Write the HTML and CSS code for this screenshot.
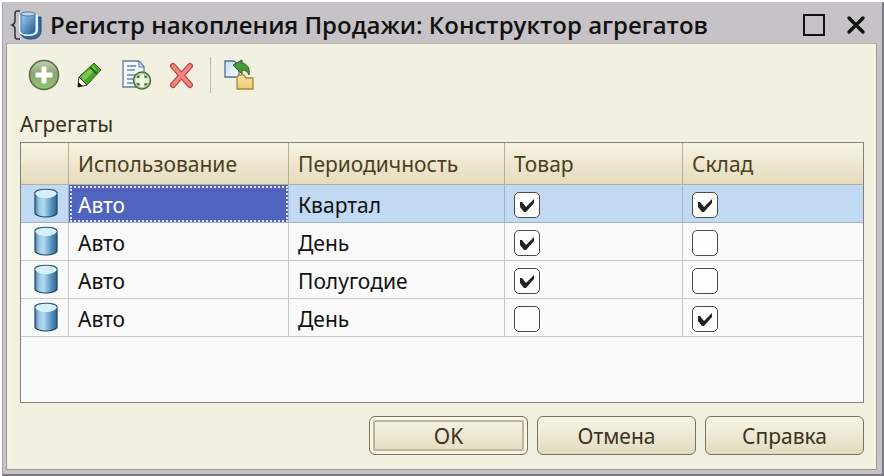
FILE: index.html
```
<!DOCTYPE html>
<html lang="ru">
<head>
    <meta charset="utf-8">
    <title>Регистр накопления Продажи: Конструктор агрегатов</title>
    <link rel="stylesheet" href="styles.css">
</head>
<body>
    <svg class="defs" width="0" height="0" aria-hidden="true">
        <defs>
            <linearGradient id="steel" x1="0" x2="1" y1="0" y2="0">
                <stop offset="0" stop-color="#4a86ae"/>
                <stop offset="0.2" stop-color="#9ccbe6"/>
                <stop offset="0.4" stop-color="#b4daee"/>
                <stop offset="0.75" stop-color="#5590bb"/>
                <stop offset="1" stop-color="#2f6690"/>
            </linearGradient>
            <linearGradient id="deep" x1="0" x2="1" y1="0" y2="1">
                <stop offset="0" stop-color="#a9cdec"/>
                <stop offset="0.5" stop-color="#5f97c9"/>
                <stop offset="1" stop-color="#22558f"/>
            </linearGradient>
            <linearGradient id="green" x1="0" x2="0" y1="0" y2="1">
                <stop offset="0" stop-color="#c0d2ab"/>
                <stop offset="0.45" stop-color="#8ba574"/>
                <stop offset="1" stop-color="#93c46c"/>
            </linearGradient>
            <linearGradient id="folder" x1="0" x2="0" y1="0" y2="1">
                <stop offset="0" stop-color="#f7e4a0"/>
                <stop offset="1" stop-color="#e8cb7c"/>
            </linearGradient>
            <linearGradient id="paper" x1="0" x2="1" y1="0" y2="1">
                <stop offset="0" stop-color="#c3dbf3"/>
                <stop offset="1" stop-color="#ffffff"/>
            </linearGradient>
            <symbol id="cylinder" viewBox="0 0 24 30">
                <path d="M1 5v20c0 2 5 4 11 4s11-2 11-4V5z" fill="url(#steel)" stroke="#1f4662" stroke-width="1.2"/>
                <ellipse cx="12" cy="6" rx="10" ry="4" fill="#dff4fc"/>
                <ellipse cx="12" cy="5" rx="11" ry="4" fill="#d5f0fb"/>
                <path d="M1 5c0-5 22-5 22 0" fill="none" stroke="#2d5874" stroke-width="1.2"/>
            </symbol>
        </defs>
    </svg>

    <div class="window">
        <header class="titlebar">
            <svg class="app-icon" viewBox="0 0 32 32">
                <path d="M10 2H7Q5 2 5 5v7q0 3-3 4 3 1 3 4v7q0 3 2 3h3" fill="none" stroke="#333" stroke-width="1.5"/>
                <path d="M27 8h4v14c0 5-4 8-10 8s-9-2-11-6z" fill="#2d6ea6" stroke="#24486b"/>
                <path d="M9 6v16c0 3 4 5 9 5s10-2 10-5V6z" fill="#e9f6fd"/>
                <path d="M11 5v17c0 4 14 4 14 0V5z" fill="url(#deep)" stroke="#3f6f9c"/>
                <ellipse cx="18" cy="5" rx="7" ry="2" fill="#b9d8f2" stroke="#4f7ba3"/>
            </svg>
            <h1 class="title">Регистр накопления Продажи: Конструктор агрегатов</h1>
            <button class="win-button" type="button" aria-label="Развернуть">
                <svg width="22" height="22" viewBox="0 0 22 22"><path d="M1 1h20v20H1z" fill="none" stroke="#111" stroke-width="2"/></svg>
            </button>
            <button class="win-button" type="button" aria-label="Закрыть">
                <svg width="20" height="20" viewBox="0 0 20 20"><path d="M3 3l14 14M17 3L3 17" stroke="#111" stroke-width="3.4" stroke-linecap="round"/></svg>
            </button>
        </header>

        <main class="content">
            <div class="toolbar">
                <button class="tool" type="button" aria-label="Добавить">
                    <svg width="32" height="32" viewBox="0 0 32 32">
                        <circle cx="16" cy="16" r="14.5" fill="url(#green)" stroke="#56694c" stroke-width="1.5"/>
                        <path d="M14 8h4v6h6v4h-6v6h-4v-6H8v-4h6z" fill="#fff" stroke="#fff" stroke-width="1" stroke-linejoin="round"/>
                    </svg>
                </button>
                <button class="tool" type="button" aria-label="Изменить">
                    <svg width="32" height="32" viewBox="0 0 32 32">
                        <path d="M5 18L20 4l7 7-14 15z" fill="#4ba32b" stroke="#2c6a1d"/>
                        <path d="M7 18L19 7l3 3-12 12z" fill="#7cc653"/>
                        <path d="M16 8l7 7" stroke="#1f6b18" stroke-width="2"/>
                        <path d="M5 18l8 8-9 2z" fill="#fffbe0" stroke="#333"/>
                        <path d="M4 23l5 4-5 1z" fill="#111"/>
                    </svg>
                </button>
                <button class="tool" type="button" aria-label="Скопировать">
                    <svg width="32" height="32" viewBox="0 0 32 32">
                        <path d="M3 2h16l5 6v20H3z" fill="#f6f9fe" stroke="#64799b" stroke-width="1.3"/>
                        <path d="M19 2l5 6h-5z" fill="#cfdcf0" stroke="#64799b"/>
                        <path d="M7 7h9M7 11h8M7 16h8M7 20h6M7 24h6" stroke="#6685b5" stroke-width="1.4"/>
                        <circle cx="22" cy="21.5" r="8.5" fill="#b5d396" stroke="#4e6b48" stroke-width="1.5"/>
                        <path d="M20 15.500h4v4h4.500v4H24v4.500h-4v-4.500h-4.500v-4H20z" fill="#f4fbe4"/>
                        <path d="M18 19v-1.500h1.500M24.500 17.500H26V19M26 24v1.500h-1.500M19.500 25.500H18V24" fill="none" stroke="#3f6c35" stroke-width="1.5"/>
                    </svg>
                </button>
                <button class="tool" type="button" aria-label="Удалить">
                    <svg width="32" height="32" viewBox="0 0 32 32">
                        <path d="M7 7l17 19M24 7L7 26" stroke="#bd4742" stroke-width="6" stroke-linecap="round"/>
                        <path d="M7 7l17 19M24 7L7 26" stroke="#f58580" stroke-width="3.5" stroke-linecap="round"/>
                    </svg>
                </button>
                <span class="separator"></span>
                <button class="tool" type="button" aria-label="Загрузить">
                    <svg width="32" height="32" viewBox="0 0 32 32">
                        <path d="M2 2h9l5 5v11H2z" fill="url(#paper)" stroke="#4c6f98" stroke-width="1.3"/>
                        <path d="M14 30V18l2-2h5l2 3h7v11z" fill="url(#folder)" stroke="#ad8535" stroke-width="1.3"/>
                        <path d="M10 6l9-5v3c6 1 8 6 7 12-2-4-4-5-7-5v4z" fill="#47993a" stroke="#24611f"/>
                    </svg>
                </button>
            </div>

            <h2 class="caption" id="caption">Агрегаты</h2>

            <div class="grid-box">
                <table class="grid" aria-labelledby="caption">
                    <colgroup>
                        <col class="col-icon">
                        <col class="col-usage">
                        <col class="col-period">
                        <col class="col-goods">
                        <col>
                    </colgroup>
                    <thead>
                        <tr>
                            <th></th>
                            <th>Использование</th>
                            <th>Периодичность</th>
                            <th>Товар</th>
                            <th>Склад</th>
                        </tr>
                    </thead>
                    <tbody>
                        <tr class="selected">
                            <td class="icon-cell"><svg class="row-icon"><use href="#cylinder"/></svg></td>
                            <td class="active">Авто</td>
                            <td>Квартал</td>
                            <td><input class="check" type="checkbox" aria-label="Товар" checked></td>
                            <td><input class="check" type="checkbox" aria-label="Склад" checked></td>
                        </tr>
                        <tr>
                            <td class="icon-cell"><svg class="row-icon"><use href="#cylinder"/></svg></td>
                            <td>Авто</td>
                            <td>День</td>
                            <td><input class="check" type="checkbox" aria-label="Товар" checked></td>
                            <td><input class="check" type="checkbox" aria-label="Склад"></td>
                        </tr>
                        <tr>
                            <td class="icon-cell"><svg class="row-icon"><use href="#cylinder"/></svg></td>
                            <td>Авто</td>
                            <td>Полугодие</td>
                            <td><input class="check" type="checkbox" aria-label="Товар" checked></td>
                            <td><input class="check" type="checkbox" aria-label="Склад"></td>
                        </tr>
                        <tr>
                            <td class="icon-cell"><svg class="row-icon"><use href="#cylinder"/></svg></td>
                            <td>Авто</td>
                            <td>День</td>
                            <td><input class="check" type="checkbox" aria-label="Товар"></td>
                            <td><input class="check" type="checkbox" aria-label="Склад" checked></td>
                        </tr>
                    </tbody>
                </table>
            </div>

            <div class="buttons">
                <button class="btn btn-default" type="button">OK</button>
                <button class="btn" type="button">Отмена</button>
                <button class="btn" type="button">Справка</button>
            </div>
        </main>
    </div>
</body>
</html>
```
FILE: styles.css
```
* {
    margin: 0;
    padding: 0;
    box-sizing: border-box;
}

body {
    font-family: "Noto Sans", "Open Sans", sans-serif;
    font-size: 21px;
    color: #111;
    background-color: #fff;
    min-height: 100vh;
    display: flex;
    padding: 2px 0 0 2px;
}

.defs {
    position: absolute;
}

.window {
    flex: 1;
    display: flex;
    flex-direction: column;
    background-color: #c5c3c5;
    border: 1px solid #a5a3a8;
    border-top-color: #c5c3c5;
    border-right: 2px solid #7b7981;
    border-bottom: 2px solid #7b7981;
    padding: 0 5px 4px 3px;
}

/* Заголовок окна */
.titlebar {
    display: flex;
    align-items: center;
    height: 40px;
    padding: 4px 4px 0 4px;
    gap: 8px;
}

.app-icon {
    width: 32px;
    height: 32px;
}

.title {
    flex: 1;
    font-family: "Open Sans", sans-serif;
    font-size: 24px;
    font-weight: 600;
    line-height: 32px;
    white-space: nowrap;
}

.win-button {
    display: flex;
    align-items: center;
    justify-content: center;
    width: 34px;
    height: 34px;
    border: none;
    background: none;
}

.content {
    flex: 1;
    display: flex;
    flex-direction: column;
    background-color: #f2f0e1;
    border: 1px solid #9b999c;
    border-top-color: #b2b0ae;
    box-shadow: inset 0 0 8px #f7f5e2;
    padding: 14px 12px 14px 13px;
}

/* Панель инструментов */
.toolbar {
    display: flex;
    align-items: center;
    height: 34px;
    padding-left: 8px;
    gap: 14px;
}

.tool {
    display: flex;
    width: 32px;
    height: 32px;
    border: none;
    background: none;
}

.separator {
    width: 1px;
    height: 36px;
    margin: 0 -2px;
    background-color: #bdb8a6;
}

.caption {
    font-size: 21px;
    font-weight: 400;
    line-height: 28px;
    margin: 18px 0 4px;
    color: #3b3220;
}

/* Таблица */
.grid-box {
    flex: 1;
    background-color: #fafafa;
    border: 1px solid #838172;
}

.grid {
    width: 100%;
    table-layout: fixed;
    border-collapse: separate;
    border-spacing: 0;
}

.col-icon {
    width: 48px;
}

.col-usage {
    width: 220px;
}

.col-period {
    width: 216px;
}

.col-goods {
    width: 178px;
}

.grid th {
    height: 42px;
    padding: 0 9px;
    text-align: left;
    font-weight: 400;
    color: #4a3f22;
    background: linear-gradient(#f6f3e1, #e5dcbd);
    border-right: 1px solid #b5ae98;
    border-bottom: 1px solid #b5ae98;
}

.grid td {
    height: 38px;
    padding: 3px 9px 0;
    border-right: 1px solid #c9c9c9;
    border-bottom: 1px solid #c9c9c9;
}

.grid th:last-child,
.grid td:last-child {
    border-right: none;
}

.grid .selected td {
    background-color: #c1d9f3;
    border-color: #9fb2c8;
}

.grid .selected .active {
    background-color: #4f63bf;
    color: #fff;
    outline: 2px dotted #dfe5fb;
    outline-offset: -3px;
}

.grid .icon-cell {
    padding: 0 0 2px 13px;
}

.row-icon {
    display: block;
    width: 24px;
    height: 30px;
}

.check {
    appearance: none;
    display: block;
    width: 26px;
    height: 26px;
    background-color: #fdfdfb;
    border: 1px solid #4c4a45;
    border-radius: 5px;
}

.check:checked {
    background-image: url("data:image/svg+xml,%3Csvg xmlns='http://www.w3.org/2000/svg' viewBox='0 0 24 24'%3E%3Cpath d='M5 9l2 0 4 5 8-8 0 4-8 9-2 0-4-5z' fill='%23222'/%3E%3C/svg%3E");
}

/* Кнопки */
.buttons {
    display: flex;
    justify-content: flex-end;
    gap: 9px;
    margin-top: 13px;
}

.btn {
    width: 159px;
    height: 39px;
    font-family: inherit;
    font-size: 21px;
    color: #3b3220;
    background: linear-gradient(#f7f5e6, #e2dbbf);
    border: 1px solid #77725d;
    border-radius: 6px;
}

.btn-default {
    box-shadow: inset 0 0 0 3px #f7f5e2, inset 0 0 0 5px #bcb496;
}
```
